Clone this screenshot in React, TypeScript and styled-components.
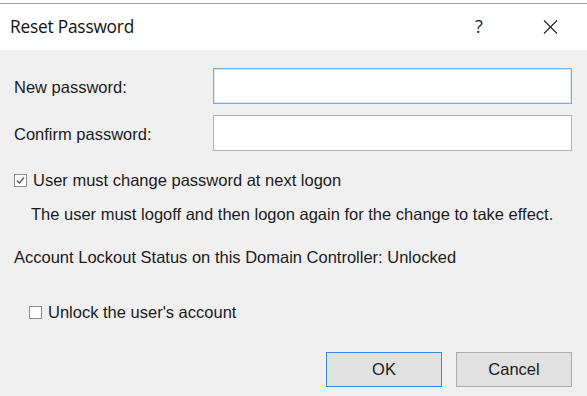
import styled, { createGlobalStyle } from "styled-components";

const Global = createGlobalStyle`
  html, body {
    margin: 0;
    padding: 0;
    background: #f0f0f0;
  }
`;

const Dialog = styled.div`
  width: 587px;
  height: 396px;
  display: flex;
  flex-direction: column;
  background: #f0f0f0;
  font-family: "Liberation Sans", Arial, sans-serif;
  font-size: 16.5px;
  color: #1b1b1b;
  overflow: hidden;
`;

const TopEdge = styled.div`
  height: 3px;
  background: #fff;
  border-bottom: 1px solid #9c9c9c;
`;

const TitleBar = styled.div`
  height: 46px;
  background: #fff;
  display: flex;
  align-items: center;
  padding-left: 10px;
`;

const Title = styled.div`
  flex: 1;
  font-family: "Open Sans", "Noto Sans", sans-serif;
  font-size: 17.3px;
  color: #111;
  letter-spacing: -0.2px;
  margin-top: -2px;
`;

const Help = styled.div`
  width: 30px;
  margin-right: 41px;
  text-align: center;
  font-family: "Open Sans", sans-serif;
  font-size: 18px;
  color: #222;
  margin-top: -2px;
`;

const Close = styled.div`
  width: 30px;
  margin-right: 22px;
  display: flex;
  justify-content: center;
`;

const Body = styled.div`
  flex: 1;
  display: flex;
  flex-direction: column;
  padding: 18px 15px 0 14px;
`;

const FieldGrid = styled.div`
  display: grid;
  grid-template-columns: 199px 1fr;
  row-gap: 11px;
  align-items: center;
`;

const Label = styled.div`
  padding-top: 3px;
`;

const Input = styled.div<{ focused?: boolean }>`
  height: 34px;
  background: #fff;
  border: 1px solid ${(p) => (p.focused ? "#7aaee0" : "#b4b4b4")};
  box-shadow: ${(p) => (p.focused ? "inset 0 0 0 1px #d4e5f6" : "none")};
`;

const Row = styled.div<{ top: number; indent?: number }>`
  display: flex;
  align-items: center;
  height: 20px;
  margin-top: ${(p) => p.top}px;
  padding-left: ${(p) => p.indent ?? 0}px;
  white-space: nowrap;
`;

const Box = styled.div`
  width: 11px;
  height: 11px;
  border: 1px solid #8f8f8f;
  background: #fdfdfd;
  margin-right: 6px;
  display: flex;
  align-items: center;
  justify-content: center;
`;

const Buttons = styled.div`
  display: flex;
  justify-content: flex-end;
  gap: 14px;
  margin-top: 30px;
`;

const Button = styled.div<{ primary?: boolean }>`
  width: 114px;
  height: 33px;
  background: #e1e1e1;
  border: 1px solid ${(p) => (p.primary ? "#3c8ad6" : "#adadad")};
  display: flex;
  align-items: center;
  justify-content: center;
`;

function Check({ checked }: { checked?: boolean }) {
  return (
    <Box>
      {checked && (
        <svg width="9" height="9" viewBox="0 0 9 9">
          <path d="M1 4.5 L3.5 7 L8 1.5" fill="none" stroke="#555" strokeWidth="1.2" />
        </svg>
      )}
    </Box>
  );
}

export default function App() {
  return (
    <>
      <Global />
      <Dialog>
        <TopEdge />
        <TitleBar>
          <Title>Reset Password</Title>
          <Help>?</Help>
          <Close>
            <svg width="15" height="14" viewBox="0 0 15 14">
              <path d="M1 0.5 L14 13.5 M14 0.5 L1 13.5" stroke="#222" strokeWidth="1.1" />
            </svg>
          </Close>
        </TitleBar>
        <Body>
          <FieldGrid>
            <Label>New password:</Label>
            <Input focused />
            <Label>Confirm password:</Label>
            <Input />
          </FieldGrid>
          <Row top={19}>
            <Check checked />
            User must change password at next logon
          </Row>
          <Row top={14} indent={17}>
            The user must logoff and then logon again for the change to take effect.
          </Row>
          <Row top={23} indent={0}>
            Account Lockout Status on this Domain Controller: Unlocked
          </Row>
          <Row top={35} indent={15}>
            <Check />
            Unlock the user's account
          </Row>
          <Buttons>
            <Button primary>OK</Button>
            <Button>Cancel</Button>
          </Buttons>
        </Body>
      </Dialog>
    </>
  );
}
